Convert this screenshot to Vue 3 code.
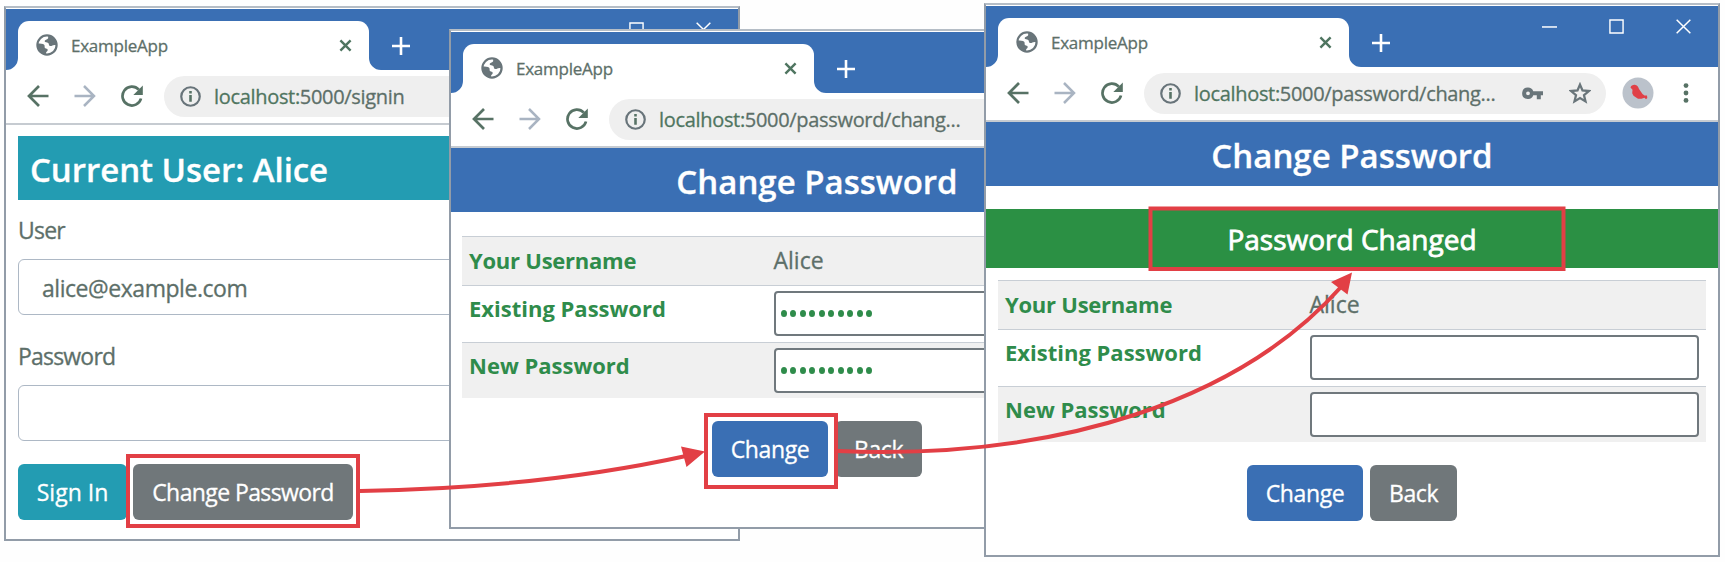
<script setup>
const windows = [
  { id: 'signin', url: '5000/signin' },
  { id: 'change', url: '5000/password/chang...' },
  { id: 'changed', url: '5000/password/chang...' },
]
</script>

<template>
  <div class="desktop">
    <section v-for="w in windows" :key="w.id" class="window" :class="w.id">
      <header class="titlebar">
        <div class="tab">
          <svg class="globe" viewBox="0 0 22 22">
            <circle cx="11" cy="11" r="9.600" fill="#fff" stroke="#69757a" stroke-width="2.200" />
            <path d="M12.500 1.500C11.500 3 13 4 11.500 5c-1.200.8-3 .8-2.800 2.400.2 1.200 2.300.6 3.500 1.500 1.200 1 .2 2.600 1.800 3 1.900.4 2.600-1.100 4.500-1 1 .1 1.800.3 2.500.6C21 6 17.500 1.500 12.500 1.500z" fill="#69757a" />
            <path d="M1.200 9.500c3 .2 5.800-.1 7 1.300 1.100 1.300-.2 2.300.8 3.200 1 .8 2.700.3 2.700 1.900 0 1.800-1.700 1.500-1.700 3v1.800C5 20.500 1 16 1.200 9.500z" fill="#69757a" />
          </svg>
          <span class="tab-title">ExampleApp</span>
          <svg class="tab-close" viewBox="0 0 14 14"><path d="M1.500 1.500l11 11M12.500 1.500l-11 11" stroke="#4f7560" stroke-width="2.600" /></svg>
          <svg class="flare left" viewBox="0 0 12 12"><path d="M12 0v12H0A12 12 0 0 0 12 0z" fill="#fff" /></svg>
          <svg class="flare right" viewBox="0 0 12 12"><path d="M0 0v12h12A12 12 0 0 1 0 0z" fill="#fff" /></svg>
        </div>
        <svg class="plus" viewBox="0 0 18 18"><path d="M9 0v18M0 9h18" stroke="#fff" stroke-width="2.600" /></svg>
        <div class="controls">
          <svg viewBox="0 0 16 16"><path d="M0 8.500h16" stroke="#fff" stroke-width="1.600" /></svg>
          <svg viewBox="0 0 16 16"><path d="M1 1h14v14H1z" fill="none" stroke="#fff" stroke-width="1.500" /></svg>
          <svg viewBox="0 0 16 16"><path d="M.7.7l14.600 14.600M15.300.7L.7 15.300" stroke="#fff" stroke-width="1.600" /></svg>
        </div>
      </header>
      <nav class="toolbar">
        <svg class="nav-icon" viewBox="0 0 22 22"><path d="M21.500 11H2M12 1L2 11l10 10" fill="none" stroke="#577265" stroke-width="2.700" /></svg>
        <svg class="nav-icon" viewBox="0 0 22 22"><path d="M.5 11h19M10 1l10 10-10 10" fill="none" stroke="#a9b4c2" stroke-width="2.500" /></svg>
        <svg class="nav-icon" viewBox="0 0 22 22"><path d="M20 13.500A9.400 9.400 0 1 1 17.800 4.700" fill="none" stroke="#577265" stroke-width="2.700" /><path d="M21.800.5v9.500h-9.500z" fill="#577265" /></svg>
        <div class="omnibox">
          <svg class="info" viewBox="0 0 22 22"><circle cx="11" cy="11" r="9.700" fill="none" stroke="#68747a" stroke-width="2.300" /><path d="M11 9.500v7M11 5.200v2.600" stroke="#577265" stroke-width="2.700" /></svg>
          <span class="url"><b>localhost:</b>{{ w.url }}</span>
          <svg class="key" viewBox="0 0 22 13"><path d="M6.300.3a6 6 0 0 1 5.500 3.800H22v4.300h-2.300v4h-4.200v-4h-3.700A6 6 0 1 1 6.300.3zm0 4a2 2 0 1 0 0 4 2 2 0 0 0 0-4z" fill="#69757a" fill-rule="evenodd" /></svg>
          <svg class="star" viewBox="0 0 22 22"><path d="M11 2.600l2.500 5.900 6.400.5-4.900 4.200 1.500 6.200L11 16.100l-5.500 3.300L7 13.200 2.100 9l6.400-.5z" fill="none" stroke="#69757a" stroke-width="2.300" /></svg>
        </div>
        <svg class="avatar" viewBox="0 0 32 32"><circle cx="16" cy="16" r="15.500" fill="#bbc2cb" /><path d="M8.500 10.500c.5-2 3-3 5-2.500 2 .6 3 2.200 3.500 4l3.500 5 2 1.500 2.500 0 .3 2.500-1.300 1.300-1.500-1.500-3 1-3.500 0-4.500-3-1.300-2.500.3-3.500z" fill="#e04047" /></svg>
        <svg class="dots" viewBox="0 0 6 20"><circle cx="3" cy="2.600" r="2.400" /><circle cx="3" cy="10" r="2.400" /><circle cx="3" cy="17.400" r="2.400" /></svg>
      </nav>

      <main v-if="w.id === 'signin'" class="signin-page">
        <h1>Current User: Alice</h1>
        <label>User</label>
        <div class="field">alice@example.com</div>
        <label>Password</label>
        <div class="field"></div>
        <div class="buttons">
          <button class="info-btn">Sign In</button>
          <button class="gray">Change Password</button>
        </div>
      </main>
      <main v-else class="password-page">
        <h1>Change Password</h1>
        <h2 v-if="w.id === 'changed'">Password Changed</h2>
        <div class="table">
          <div class="row first"><strong>Your Username</strong><span class="name">Alice</span></div>
          <div class="row"><strong>Existing Password</strong><div class="input"><template v-if="w.id === 'change'"><i v-for="n in 10" :key="n" class="dot"></i></template></div></div>
          <div class="row striped"><strong>New Password</strong><div class="input"><template v-if="w.id === 'change'"><i v-for="n in 10" :key="n" class="dot"></i></template></div></div>
        </div>
        <div class="buttons">
          <button class="blue">Change</button>
          <button class="gray">Back</button>
        </div>
      </main>
    </section>

    <svg class="callouts" viewBox="0 0 1725 562">
      <g fill="none" stroke="#e23f45" stroke-width="4">
        <rect x="128" y="456" width="230" height="70" />
        <rect x="706" y="415" width="130" height="72" />
        <rect x="1150.500" y="208.500" width="413" height="60.500" />
        <path d="M360 491Q540 488 686 456" />
        <path d="M838 451C1060 460 1240 400 1341 287" />
      </g>
      <path d="M705 451.500L681 446.500L686.500 467zM1352 272.500L1331 282L1347.500 294.500z" fill="#e23f45" />
    </svg>
  </div>
</template>

<style>
body { background: #fff; overflow: hidden; }
</style>

<style scoped>
* { box-sizing: border-box; }
.desktop { position: relative; width: 1725px; height: 562px; overflow: hidden; background: #fefefe; font-family: "Open Sans", "Noto Sans", sans-serif; color: #5d6f69; -webkit-text-stroke: 0.3px currentColor; }
svg { display: block; flex: none; }
.window { position: absolute; width: 736px; border: 2px solid #929ca8; border-top-color: #b5bdc6; background: #fff; padding-top: 1px; overflow: hidden; }
.signin { left: 4px; top: 6px; height: 535px; }
.change { left: 449px; top: 29px; height: 500px; }
.changed { left: 984px; top: 3px; height: 554px; }
.titlebar { display: flex; height: 61px; background: #3a6fb4; padding: 12px 0 0 12px; }
.tab { position: relative; display: flex; align-items: center; width: 351px; height: 49px; background: #fff; border-radius: 11px 11px 0 0; padding: 0 17px 1px 18px; }
.flare { position: absolute; width: 12px; height: 12px; bottom: 0; }
.flare.left { left: -12px; }
.flare.right { right: -12px; }
.globe { width: 22px; height: 22px; }
.tab-title { flex: 1; margin-left: 13px; font-size: 17px; letter-spacing: -0.25px; }
.tab-close { width: 13px; height: 13px; }
.plus { width: 18px; height: 18px; margin: 16px 0 0 23px; }
.controls { display: flex; gap: 52px; margin: 1px 27px 0 auto; }
.controls svg { width: 15px; height: 15px; }
.toolbar { display: flex; align-items: center; height: 55px; padding: 0 13px 1px 21px; border-bottom: 2px solid #c6cbd1; }
.nav-icon { width: 22px; height: 22px; margin-right: 25px; }
.omnibox { display: flex; align-items: center; width: 462px; height: 41px; margin-left: -4px; border-radius: 21px; background: #efefef; padding: 0 15px 0 16px; }
.info { width: 21px; height: 21px; }
.url { flex: 1; margin-left: 13px; font-size: 20px; letter-spacing: -0.32px; white-space: nowrap; }
.url b { font-weight: 400; color: #4f7560; }
.key { width: 21px; height: 13px; margin-right: 26px; }
.star { width: 22px; height: 22px; }
.avatar { width: 32px; height: 32px; margin-left: 16px; }
.dots { width: 6px; height: 20px; margin-left: 29px; fill: #577265; }
h1, h2 { margin: 0; color: #fff; }
h1 { display: flex; align-items: center; height: 64px; padding-top: 2px; font-size: 33px; font-weight: 600; }
.signin-page { padding: 11px 12px 0; }
.signin-page h1 { background: #239cb2; padding-left: 12px; padding-top: 3px; letter-spacing: -0.05px; }
label { display: flex; align-items: center; height: 59px; font-size: 23px; letter-spacing: -0.8px; }
.field { display: flex; align-items: center; height: 56px; border: 1.500px solid #adb8c5; border-radius: 6px; padding: 2px 0 0 23px; font-size: 23px; letter-spacing: -0.45px; }
.field + label { height: 70px; padding-top: 12px; }
.signin-page .buttons { display: flex; gap: 6px; margin-top: 23px; }
button { display: flex; align-items: center; justify-content: center; height: 56px; padding: 0; border: 0; border-radius: 6px; color: #fff; font-family: inherit; font-size: 23px; letter-spacing: -0.4px; -webkit-text-stroke: 0.3px currentColor; }
.info-btn { width: 109px; background: #239cb2; letter-spacing: 0; }
.gray { width: 87px; background: #70777a; }
.signin-page .gray { width: 220px; letter-spacing: -0.6px; }
.blue { width: 116px; background: #3a6fb4; }
.password-page h1 { justify-content: center; background: #3a6fb4; }
h2 { display: flex; align-items: center; justify-content: center; height: 59px; margin-top: 23px; padding-top: 1px; background: #2b9044; font-size: 28px; font-weight: 400; -webkit-text-stroke-width: 0.8px; }
.table { margin: 24px 12px 0 12px; }
.change .table { margin-left: 11px; }
h2 + .table { margin-top: 12px; }
.row { display: grid; grid-template-columns: 304.500px 1fr; height: 57px; border-top: 1px solid #c8ced5; padding: 5px 7px; }
.row.first { height: 49px; padding-top: 6px; background: #f0f0f0; }
.row.striped { height: 56px; background: #f0f0f0; }
.row strong, .name { font-weight: 700; font-size: 22px; line-height: 34px; color: #2f8c4b; -webkit-text-stroke-width: 0; }
.first strong { letter-spacing: -0.25px; }
.row .name { font-weight: 400; font-size: 23px; color: #5d6f69; -webkit-text-stroke-width: 0.3px; }
.input { display: flex; align-items: center; gap: 3.500px; height: 45px; border: 2px solid #70787d; border-radius: 4px; background: #fff; padding-left: 5px; }
.dot { width: 6px; height: 7px; border-radius: 50%; background: #2f8c4b; }
.password-page .buttons { display: flex; justify-content: center; gap: 7px; margin-top: 23px; }
.callouts { position: absolute; inset: 0; width: 1725px; height: 562px; }
</style>
